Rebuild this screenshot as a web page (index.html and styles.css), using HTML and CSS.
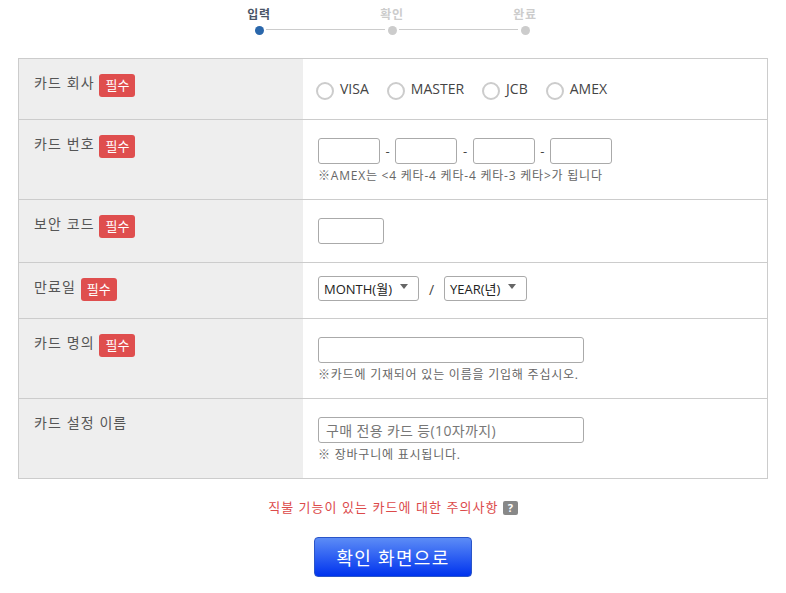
FILE: index.html
```html
<!DOCTYPE html>
<html lang="ko">
<head>
    <meta charset="UTF-8">
    <title>카드 등록</title>
    <link rel="stylesheet" href="styles.css">
</head>
<body>
    <div class="steps">
        <div class="step step-active"><span class="step-name">입력</span><span class="step-dot"></span></div>
        <div class="step"><span class="step-name">확인</span><span class="step-dot"></span></div>
        <div class="step"><span class="step-name">완료</span><span class="step-dot"></span></div>
    </div>

    <div class="card-form">
        <div class="row row-brand">
            <div class="label">카드 회사 <span class="required">필수</span></div>
            <div class="value brands">
                <label class="brand"><span class="radio"></span>VISA</label>
                <label class="brand"><span class="radio"></span>MASTER</label>
                <label class="brand"><span class="radio"></span>JCB</label>
                <label class="brand"><span class="radio"></span>AMEX</label>
            </div>
        </div>
        <div class="row row-tall">
            <div class="label">카드 번호 <span class="required">필수</span></div>
            <div class="value">
                <div class="number-line">
                    <input class="input input-num" type="text"><span>-</span>
                    <input class="input input-num" type="text"><span>-</span>
                    <input class="input input-num" type="text"><span>-</span>
                    <input class="input input-num" type="text">
                </div>
                <p class="note">※AMEX는 &lt;4 케타-4 케타-4 케타-3 케타&gt;가 됩니다</p>
            </div>
        </div>
        <div class="row row-code">
            <div class="label">보안 코드 <span class="required">필수</span></div>
            <div class="value"><input class="input input-code" type="text"></div>
        </div>
        <div class="row row-date">
            <div class="label">만료일 <span class="required">필수</span></div>
            <div class="value date-line">
                <div class="select select-month">MONTH(월)<span class="arrow"></span></div>
                <span class="slash">/</span>
                <div class="select select-year">YEAR(년)<span class="arrow"></span></div>
            </div>
        </div>
        <div class="row row-tall">
            <div class="label">카드 명의 <span class="required">필수</span></div>
            <div class="value">
                <input class="input input-wide" type="text">
                <p class="note">※카드에 기재되어 있는 이름을 기입해 주십시오.</p>
            </div>
        </div>
        <div class="row row-tall">
            <div class="label">카드 설정 이름</div>
            <div class="value">
                <input class="input input-wide" type="text" placeholder="구매 전용 카드 등(10자까지)">
                <p class="note">※ 장바구니에 표시됩니다.</p>
            </div>
        </div>
    </div>

    <div class="caution">직불 기능이 있는 카드에 대한 주의사항 <span class="help">?</span></div>

    <div class="actions">
        <button class="submit" type="button">확인 화면으로</button>
    </div>
</body>
</html>
```

FILE: styles.css
```css
* {
    box-sizing: border-box;
}

body {
    margin: 0;
    padding: 0 18px;
    background: #fff;
    color: #444;
    font-family: "Open Sans", "Noto Sans CJK KR", sans-serif;
    font-size: 14px;
}

/* step indicator */
.steps {
    display: flex;
    justify-content: center;
    height: 58px;
    padding-top: 7px;
    padding-right: 2px;
}

.step {
    position: relative;
    display: flex;
    flex-direction: column;
    align-items: center;
    width: 133px;
}

.step-name {
    font-size: 12px;
    line-height: 16px;
    font-weight: 700;
    color: #ccc;
    letter-spacing: 0.6px;
}

.step-active .step-name {
    color: #4a5566;
}

.step-dot {
    width: 9px;
    height: 9px;
    margin-top: 3px;
    border-radius: 50%;
    background: #ccc;
}

.step-active .step-dot {
    background: #2a67ab;
}

.step:not(:last-child)::after {
    content: "";
    position: absolute;
    top: 22px;
    left: 73px;
    width: 119px;
    height: 1px;
    background: #ccc;
}

/* form table */
.card-form {
    border: 1px solid #ccc;
    border-bottom: 0;
}

.row {
    display: flex;
    border-bottom: 1px solid #ccc;
}

.row-brand { height: 61px; }
.row-tall { height: 80px; }
.row-code { height: 63px; }
.row-date { height: 56px; }

.label {
    width: 284px;
    padding: 14px 15px 0;
    background: #eee;
    color: #555;
    line-height: 20px;
    letter-spacing: 1.1px;
}

.required {
    display: inline-block;
    width: 36px;
    height: 23px;
    border-radius: 3px;
    background: #df4e4e;
    color: #fff;
    font-size: 13px;
    letter-spacing: 0;
    line-height: 22px;
    text-align: center;
    vertical-align: -2px;
}

.value {
    flex: 1;
    padding: 18px 15px 0;
}

.input {
    display: block;
    height: 26px;
    padding: 0 7px;
    border: 1px solid #aaa;
    border-radius: 3px;
    background: #fff;
    font-family: inherit;
    font-size: 14px;
}

.input::placeholder {
    color: #777;
    letter-spacing: 0.35px;
}

.input-num { width: 62px; }
.input-code { width: 66px; }
.input-wide { width: 266px; }

.number-line {
    display: flex;
    align-items: center;
    gap: 5.6px;
    font-size: 13px;
}

.note {
    margin: 3px 0 0;
    color: #666;
    font-size: 12px;
    letter-spacing: 0.78px;
    line-height: 18px;
}

/* radios */
.brands {
    display: flex;
    align-items: center;
    gap: 18px;
    padding-top: 0;
    padding-left: 13px;
}

.brand {
    display: flex;
    align-items: center;
    gap: 6px;
    padding-bottom: 2px;
}

.radio {
    width: 18px;
    height: 18px;
    margin-top: 6px;
    border: 2px solid #ccc;
    border-radius: 50%;
}

/* selects */
.date-line {
    display: flex;
    align-items: flex-start;
    padding-top: 13px;
}

.select {
    position: relative;
    height: 25px;
    padding-left: 5px;
    border: 1px solid #aaa;
    border-radius: 3px;
    color: #222;
    font-size: 13px;
    line-height: 24px;
}

.select-month { width: 101px; }
.select-year { width: 83px; }

.arrow {
    position: absolute;
    top: 7px;
    right: 10px;
    border-left: 4px solid transparent;
    border-right: 4px solid transparent;
    border-top: 5px solid #666;
}

.slash {
    width: 25px;
    text-align: center;
    line-height: 27px;
}

/* bottom */
.caution {
    margin-top: 19px;
    color: #dc4a4a;
    font-size: 13px;
    letter-spacing: 1.05px;
    line-height: 18px;
    text-align: center;
}

.help {
    display: inline-block;
    width: 15px;
    height: 14px;
    border-radius: 2px;
    background: #888;
    color: #fff;
    font-size: 11px;
    font-weight: 700;
    letter-spacing: 0;
    line-height: 14px;
}

.actions {
    display: flex;
    justify-content: center;
    margin-top: 21px;
}

.submit {
    width: 158px;
    height: 40px;
    border: 1px solid #2a55c8;
    border-radius: 4px;
    background: linear-gradient(#5c8cf6, #0033ee);
    color: #fff;
    font-family: inherit;
    font-size: 18px;
    letter-spacing: 1.3px;
}
```
